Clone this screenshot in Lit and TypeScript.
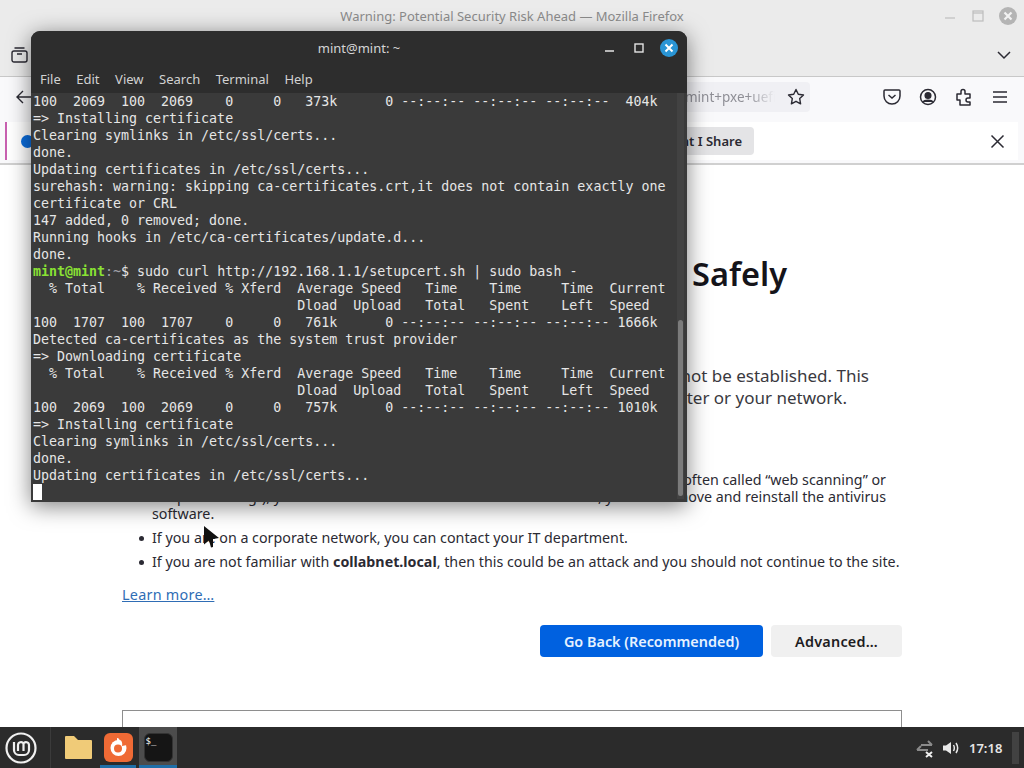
import { LitElement, html, css } from "lit";
import { customElement } from "lit/decorators.js";

const TERM = `100  2069  100  2069    0     0   373k      0 --:--:-- --:--:-- --:--:--  404k
=> Installing certificate
Clearing symlinks in /etc/ssl/certs...
done.
Updating certificates in /etc/ssl/certs...
surehash: warning: skipping ca-certificates.crt,it does not contain exactly one
certificate or CRL
147 added, 0 removed; done.
Running hooks in /etc/ca-certificates/update.d...
done.`;
const TERM2 = ` sudo curl http://192.168.1.1/setupcert.sh | sudo bash -
  % Total    % Received % Xferd  Average Speed   Time    Time     Time  Current
                                 Dload  Upload   Total   Spent    Left  Speed
100  1707  100  1707    0     0   761k      0 --:--:-- --:--:-- --:--:-- 1666k
Detected ca-certificates as the system trust provider
=> Downloading certificate
  % Total    % Received % Xferd  Average Speed   Time    Time     Time  Current
                                 Dload  Upload   Total   Spent    Left  Speed
100  2069  100  2069    0     0   757k      0 --:--:-- --:--:-- --:--:-- 1010k
=> Installing certificate
Clearing symlinks in /etc/ssl/certs...
done.
Updating certificates in /etc/ssl/certs...
`;

@customElement("app-root")
export class AppRoot extends LitElement {
  static styles = css`
    :host { display: block; width: 1024px; height: 768px; position: relative; overflow: hidden; background: #fff; font-family: "Noto Sans", sans-serif; color: #15141a; }
    .screen { width: 1024px; height: 768px; display: flex; flex-direction: column; }
    .ff { flex: 1; min-height: 0; display: flex; flex-direction: column; overflow: hidden; }
    .titlebar { height: 33px; flex: none; background: #ebebeb; display: flex; align-items: center; justify-content: center; position: relative; color: #8b8b8b; font-size: 13px; padding-bottom: 2px; box-sizing: border-box; }
    .wm { position: absolute; right: 7px; top: 7px; display: flex; align-items: center; gap: 14px; }
    .wm svg { display: block; }
    .tabs { height: 43px; flex: none; background: #ebebeb; border-bottom: 1px solid #c8c8c8; display: flex; align-items: center; justify-content: space-between; padding: 0 12px 0 11px; box-sizing: content-box; }
    .toolbar { height: 43px; flex: none; background: #f9f9fb; display: flex; align-items: center; position: relative; padding: 0 14px 3px 16px; box-sizing: border-box; justify-content: flex-end; }
    .urlbar { position: absolute; left: 40px; width: 770px; top: 5px; height: 30px; background: #f0f0f4; border-radius: 4px; display: flex; align-items: center; justify-content: flex-end; padding-right: 35px; box-sizing: border-box; font-size: 13.5px; color: #8f8f96; }
    .urlbar .q { width: 90px; white-space: nowrap; -webkit-mask-image: linear-gradient(90deg, #000 70%, transparent 100%); mask-image: linear-gradient(90deg, #000 70%, transparent 100%); }
    .urlbar svg { position: absolute; right: 4px; top: 5px; }
    .back { position: absolute; left: 15px; top: 11px; }
    .tbi { width: 20px; height: 20px; display: block; }
    .tbicons { display: flex; gap: 16px; align-items: center; }
    .notice { height: 45px; flex: none; background: #f9f9fb; border-bottom: 2px solid #d0d0d0; padding: 2px 6px 3px 5px; box-sizing: border-box; }
    .noticein { height: 100%; background: #fff; border-left: 2px solid #c860b0; display: flex; align-items: center; position: relative; padding-left: 14px; }
    .info { width: 13px; height: 13px; border-radius: 50%; background: #0a6cdc; }
    .share { position: absolute; left: 300px; width: 447px; top: 5px; height: 28px; background: #e4e4e6; border-radius: 4px; font-size: 13px; font-weight: 600; display: flex; align-items: center; justify-content: flex-end; padding-right: 12px; box-sizing: border-box; color: #2b2a33; }
    .nx { position: absolute; right: 13px; top: 12px; }
    .page { flex: 1; min-height: 0; background: #fff; padding: 0 122px; overflow: hidden; }
    .line { display: flex; justify-content: flex-end; white-space: nowrap; }
    h1 { margin: 87px 0 0; width: 665px; font-size: 32.5px; line-height: 44px; font-weight: 600; color: #15141a; }
    .desc { margin-top: 69px; font-size: 17px; line-height: 22px; color: #3a3940; }
    .d1 { width: 747px; }
    .d2 { width: 725px; }
    h2 { margin: 20px 0 0; font-size: 17px; line-height: 22px; font-weight: 600; color: transparent; }
    ul { margin: 20px 0 0; padding: 0 0 0 30px; list-style: none; font-size: 14.27px; line-height: 17px; color: #2b2a33; }
    li { position: relative; margin-bottom: 7px; }
    li::before { content: ""; position: absolute; left: -13px; top: 7px; width: 5px; height: 5px; border-radius: 50%; background: #2b2a33; }
    li .l1 { width: 734px; }
    li .l2 { width: 734px; }
    .plain { white-space: nowrap; }
    .learn { display: block; margin-top: 15px; font-size: 14.4px; letter-spacing: .25px; line-height: 20px; color: #2f6db5; text-decoration: underline; }
    .btns { display: flex; justify-content: flex-end; gap: 8px; margin-top: 20px; }
    .btn { height: 32px; border-radius: 4px; display: flex; align-items: center; justify-content: center; font-size: 14.4px; font-weight: 600; }
    .primary { width: 223px; background: #0061e0; color: #e6f2ff; }
    .secondary { width: 131px; background: #f0f0f0; color: #1d1c22; letter-spacing: .25px; }
    .box { margin-top: 53px; height: 60px; border: 1px solid #8e8e8e; box-sizing: border-box; }

    .term { position: absolute; left: 31px; top: 31px; width: 656px; height: 471px; border-radius: 9px 9px 0 0; background: #3a3a3a; box-shadow: 0 4px 22px rgba(0,0,0,.5); display: flex; flex-direction: column; overflow: hidden; color: #e4e4e4; }
    .thead { height: 35px; flex: none; background: #2d2d2d; position: relative; display: flex; align-items: center; justify-content: center; font-size: 13px; color: #d6d6d6; padding-bottom: 2px; box-sizing: border-box; }
    .tctrl { position: absolute; right: 9px; top: 8px; display: flex; align-items: center; gap: 13px; }
    .tctrl svg { display: block; }
    .menu { height: 27px; flex: none; background: #2d2d2d; display: flex; align-items: center; padding: 0 0 2px 9px; box-sizing: border-box; gap: 15.500px; font-size: 13px; color: #d2d2d2; }
    .tbody { flex: 1; min-height: 0; position: relative; padding-left: 2px; }
    pre { margin: 0; font-family: "DejaVu Sans Mono", monospace; font-size: 13.3px; line-height: 17px; color: #e6e6e6; }
    .user { color: #8ae234; font-weight: 700; }
    .path { color: #a0a0a8; }
    .cursor { display: inline-block; width: 9px; height: 16px; background: #fff; vertical-align: top; }
    .sbtrack { position: absolute; right: 3px; top: 0; bottom: 3px; width: 7px; background: #424242; }
    .sbthumb { position: absolute; left: 1px; right: 1px; top: 227px; bottom: 3px; background: #7b7b7b; border-radius: 3px; }
    .mouse { position: absolute; left: 204px; top: 526px; }

    .taskbar { height: 41px; flex: none; background: #2b2b2b; display: flex; align-items: center; position: relative; color: #e8e8e8; }
    .mint { margin-left: 5px; width: 32px; height: 32px; }
    .sep { width: 1px; height: 41px; background: #3b3b3b; margin-left: 13px; }
    .app { height: 41px; display: flex; align-items: center; justify-content: center; position: relative; box-sizing: border-box; }
    .app.folder { margin-left: 10px; width: 34px; }
    .app.fox { margin-left: 5px; width: 36px; border-bottom: 3px solid #1f6ea8; padding-top: 3px; }
    .app.trm { margin-left: 3px; width: 38px; background: #4c4c4c; border-bottom: 3px solid #1f6ea8; padding-top: 3px; }
    .ticon { width: 29px; height: 29px; border-radius: 6px; background: #151515; border: 1px solid #333; box-sizing: border-box; font-family: "DejaVu Sans Mono", monospace; font-size: 9px; line-height: 14px; color: #fff; padding-left: 1px; }
    .tray { margin-left: auto; display: flex; align-items: center; padding-right: 5px; }
    .spk { margin-left: 7px; }
    .clock { font-size: 13px; font-weight: 600; margin-left: 9px; width: 34px; white-space: nowrap; color: #e6e6e6; }
    .handle { width: 7px; height: 32px; background: #424242; margin-left: 9px; }
  `;

  render() {
    const stroke = "#2b2a33";
    return html`
      <div class="screen">
        <div class="ff">
          <div class="titlebar">
            Warning: Potential Security Risk Ahead — Mozilla Firefox
            <div class="wm">
              <svg width="14" height="14" viewBox="0 0 14 14"><path d="M2 9h10" stroke="#c4c4c4" stroke-width="1.4"/></svg>
              <svg width="14" height="14" viewBox="0 0 14 14" fill="none" stroke="#bdbdbd" stroke-width="1.2"><rect x="2" y="2" width="10" height="10"/><path d="M2 4h10"/></svg>
              <svg width="18" height="18" viewBox="0 0 18 18"><circle cx="9" cy="9" r="9" fill="#b4b4b4"/><path d="M5.5 5.5l7 7M12.5 5.5l-7 7" stroke="#f2f2f2" stroke-width="2.2"/></svg>
            </div>
          </div>
          <div class="tabs">
            <svg width="17" height="17" viewBox="0 0 17 17" fill="none" stroke="#2b2a33" stroke-width="1.4"><rect x="1" y="5" width="15" height="11" rx="2"/><path d="M3.5 2h10M6 8h5"/></svg>
            <svg width="16" height="16" viewBox="0 0 16 16" fill="none" stroke="#2b2a33" stroke-width="1.5"><path d="M2 5l6 6 6-6"/></svg>
          </div>
          <div class="toolbar">
            <svg class="back" width="18" height="18" viewBox="0 0 18 18" fill="none" stroke="${stroke}" stroke-width="1.4"><path d="M16 9H2M8 3L2 9l6 6"/></svg>
            <div class="urlbar">
              <span class="q">mint+pxe+uefi</span>
              <svg width="20" height="20" viewBox="0 0 20 20" fill="none" stroke="${stroke}" stroke-width="1.4" stroke-linejoin="round"><path d="M10 2.5l2.3 4.8 5.2.7-3.8 3.6.9 5.2-4.6-2.5-4.6 2.5.9-5.2L2.5 8l5.2-.7z"/></svg>
            </div>
            <div class="tbicons">
              <svg class="tbi" viewBox="0 0 20 20" fill="none" stroke="${stroke}" stroke-width="1.5"><path d="M3 3h14a1 1 0 0 1 1 1v5a8 8 0 0 1-16 0V4a1 1 0 0 1 1-1z"/><path d="M6.5 8l3.5 3 3.500-3"/></svg>
              <svg class="tbi" viewBox="0 0 20 20" fill="none" stroke="${stroke}" stroke-width="1.5"><circle cx="10" cy="10" r="7.500"/><circle cx="10" cy="8.500" r="2.800" fill="${stroke}"/><path d="M5 15c1.500-2.500 8.500-2.500 10 0" fill="${stroke}"/></svg>
              <svg class="tbi" viewBox="0 0 20 20" fill="none" stroke="${stroke}" stroke-width="1.5" stroke-linejoin="round"><path d="M3 7h4V4.500a2 2 0 0 1 4 0V7h5v4h-2a2 2 0 0 0 0 4h2v3H6v-5H3z"/></svg>
              <svg class="tbi" viewBox="0 0 20 20" fill="none" stroke="${stroke}" stroke-width="1.5"><path d="M3 5h14M3 10h14M3 15h14"/></svg>
            </div>
          </div>
          <div class="notice">
            <div class="noticein">
              <div class="info"></div>
              <div class="share">Choose What I Share</div>
              <svg class="nx" width="15" height="15" viewBox="0 0 15 15" fill="none" stroke="${stroke}" stroke-width="1.5"><path d="M1.500 1.500l12 12M13.500 1.500l-12 12"/></svg>
            </div>
          </div>
          <div class="page">
            <h1 class="line"><span>Software is Preventing Firefox From Safely</span></h1>
            <div class="desc">
              <div class="line d1"><span>collabnet.local is most likely a safe site, but a secure connection could not be established. This</span></div>
              <div class="line d2"><span>issue is caused by software, which is either software on your computer or your network.</span></div>
            </div>
            <h2>What can you do?</h2>
            <ul>
              <li>
                <div class="line l1"><span>If your antivirus software includes a feature that scans encrypted connections (often called “web scanning” or</span></div>
                <div class="line l2"><span>“https scanning”), you can disable that feature. If that doesn’t work, you can remove and reinstall the antivirus</span></div>
                <div class="plain">software.</div>
              </li>
              <li class="plain">If you are on a corporate network, you can contact your IT department.</li>
              <li class="plain">If you are not familiar with <b>collabnet.local</b>, then this could be an attack and you should not continue to the site.</li>
            </ul>
            <a class="learn">Learn more…</a>
            <div class="btns">
              <div class="btn primary">Go Back (Recommended)</div>
              <div class="btn secondary">Advanced…</div>
            </div>
            <div class="box"></div>
          </div>
        </div>
        <div class="taskbar">
          <svg class="mint" viewBox="0 0 32 32" fill="none" stroke="#f0f0f0" stroke-width="2.200"><circle cx="16" cy="16" r="14.500"/><path d="M9 10v8a5 5 0 0 0 5 5h5a5 5 0 0 0 5-5v-5a3 3 0 0 0-5.500-1.500A3 3 0 0 0 13 13v6M18.500 12v7"/></svg>
          <div class="sep"></div>
          <div class="app folder">
            <svg width="29" height="25" viewBox="0 0 29 25"><path d="M1 2a1 1 0 0 1 1-1h8l4 4h13a1 1 0 0 1 1 1v17a1 1 0 0 1-1 1H2a1 1 0 0 1-1-1z" fill="#f0cb78"/></svg>
          </div>
          <div class="app fox">
            <svg width="29" height="29" viewBox="0 0 29 29"><rect width="29" height="29" rx="6" fill="#ef6a35"/><circle cx="14.500" cy="15" r="8" fill="#fff"/><circle cx="14" cy="15.500" r="4" fill="#ef6a35"/><path d="M15 3c5 2 8 5 8 9l-5 1c1-3-1-6-3-10z" fill="#ef6a35"/><path d="M13 5c2 0 3 2 3 4l-3-1z" fill="#fff"/></svg>
          </div>
          <div class="app trm"><div class="ticon">$_</div></div>
          <div class="tray">
            <svg width="20" height="20" viewBox="0 0 20 20" fill="none" stroke="#8a8a8a" stroke-width="2"><path d="M6 7h11M13 3l4 4M13 12H2M6 8l-4 4"/><path d="M11 14l6 5M17 14l-6 5" stroke="#efefef"/></svg>
            <svg class="spk" width="18" height="18" viewBox="0 0 18 18" fill="none" stroke="#e8e8e8" stroke-width="1.500"><path d="M1 6.500h3L9 3v12l-5-3.500H1z" fill="#e8e8e8" stroke="none"/><path d="M11.500 6c1 1.800 1 4.200 0 6M14 4c2 3 2 7 0 10"/></svg>
            <div class="clock">17:18</div>
            <div class="handle"></div>
          </div>
        </div>
      </div>

      <div class="term">
        <div class="thead">
          mint@mint: ~
          <div class="tctrl">
            <svg width="16" height="16" viewBox="0 0 16 16"><path d="M3 11h9" stroke="#e4e4e4" stroke-width="1.400"/></svg>
            <svg width="16" height="16" viewBox="0 0 16 16" fill="none" stroke="#e4e4e4" stroke-width="1.400"><rect x="4" y="4" width="8" height="8"/></svg>
            <svg width="18" height="18" viewBox="0 0 18 18"><circle cx="9" cy="9" r="9" fill="#2a95d5"/><path d="M5.500 5.500l7 7M12.500 5.500l-7 7" stroke="#fff" stroke-width="2"/></svg>
          </div>
        </div>
        <div class="menu"><span>File</span><span>Edit</span><span>View</span><span>Search</span><span>Terminal</span><span>Help</span></div>
        <div class="tbody">
          <pre>${TERM}
<span class="user">mint@mint</span><span class="path">:~</span>$${TERM2}<span class="cursor"></span></pre>
          <div class="sbtrack"><div class="sbthumb"></div></div>
        </div>
      </div>
      <svg class="mouse" width="16" height="22" viewBox="0 0 16 22"><path d="M0 0l15 12-6 1 0 8-2 .5-2-7-5 4z" fill="#111"/></svg>
    `;
  }
}
